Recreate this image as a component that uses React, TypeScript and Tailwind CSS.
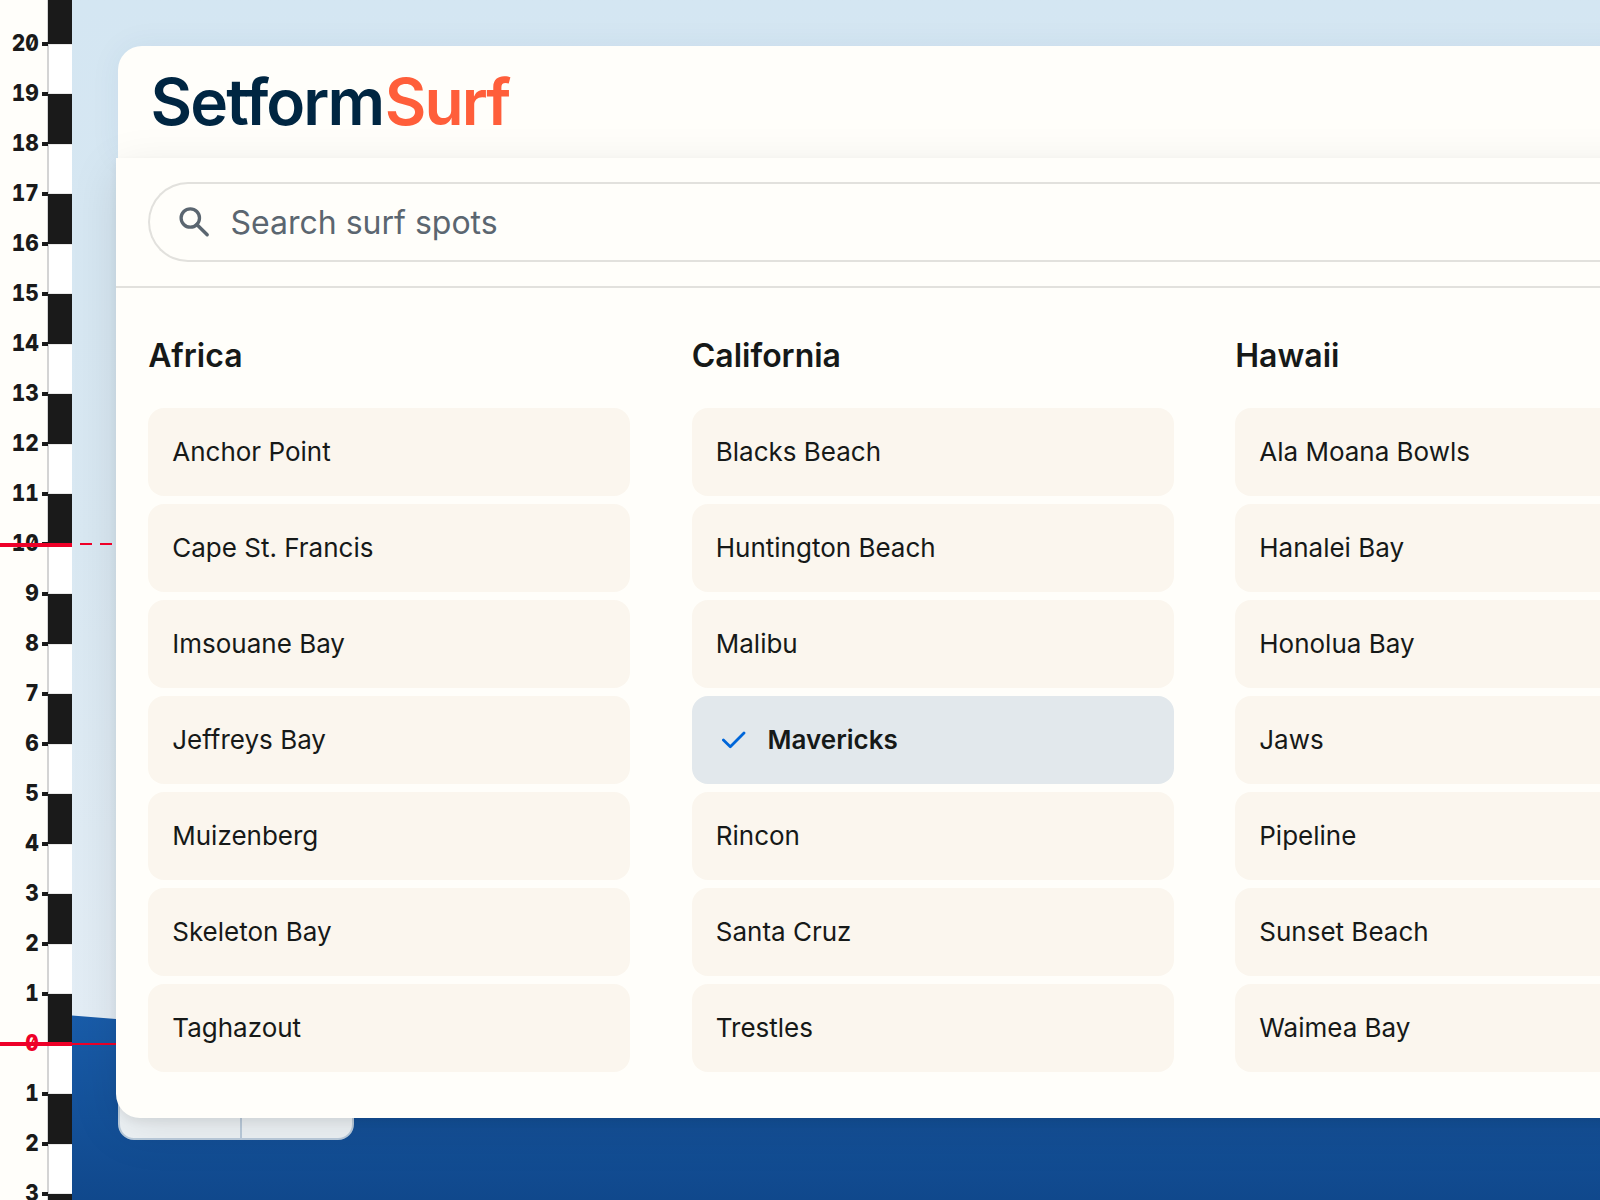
import clsx from "clsx";

interface SpotGroup {
    region: string;
    spots: string[];
}

const SELECTED_SPOT = "Mavericks";

const GROUPS: SpotGroup[] = [
    {
        region: "Africa",
        spots: [
            "Anchor Point",
            "Cape St. Francis",
            "Imsouane Bay",
            "Jeffreys Bay",
            "Muizenberg",
            "Skeleton Bay",
            "Taghazout",
        ],
    },
    {
        region: "California",
        spots: [
            "Blacks Beach",
            "Huntington Beach",
            "Malibu",
            "Mavericks",
            "Rincon",
            "Santa Cruz",
            "Trestles",
        ],
    },
    {
        region: "Hawaii",
        spots: [
            "Ala Moana Bowls",
            "Hanalei Bay",
            "Honolua Bay",
            "Jaws",
            "Pipeline",
            "Sunset Beach",
            "Waimea Bay",
        ],
    },
];

// feet above and below the waterline, top to bottom
const MARKS = Array.from({ length: 24 }, (_, i) => 20 - i);

function SearchIcon() {
    return (
        <svg viewBox="0 0 32 32" className="h-8 w-8 shrink-0" fill="none">
            <circle cx="11.3" cy="12" r="9.2" stroke="#5b6670" strokeWidth="3.3" />
            <path d="M17.8 18.5 28.2 28.8" stroke="#5b6670" strokeWidth="3.4" strokeLinecap="round" />
        </svg>
    );
}

function CheckIcon() {
    return (
        <svg viewBox="0 0 24 18" className="h-[18px] w-6 shrink-0" fill="none">
            <path
                d="M1.4 9.1 8.3 15.8 22 2"
                stroke="#0066d9"
                strokeWidth="2.8"
                strokeLinecap="round"
                strokeLinejoin="round"
            />
        </svg>
    );
}

function DepthRuler() {
    return (
        <div className="relative z-10 flex h-full w-[72px] shrink-0 bg-[#fffefa]">
            <div className="flex w-12 flex-col border-r border-[#d4d4d4] pt-[19px]">
                {MARKS.map(mark => (
                    <div
                        key={mark}
                        className={clsx(
                            "-mr-px flex h-[50px] shrink-0 items-center justify-end",
                            mark === 0 ? "text-[#ee0028]" : "text-[#1a1a1a]",
                        )}
                    >
                        <span className="mr-[3.5px] -mt-0.5 origin-right scale-x-[0.91] text-[23px] leading-none font-extrabold [font-feature-settings:'tnum','zero']">
                            {Math.abs(mark)}
                        </span>
                        <span className="h-1 w-1.5 bg-[#1a1a1a]" />
                    </div>
                ))}
            </div>
            <div className="flex w-6 flex-col">
                <div className="h-11 shrink-0 bg-[#1a1a1a]" />
                {MARKS.map((mark, i) => (
                    <div
                        key={mark}
                        className={clsx(
                            "h-[50px] shrink-0",
                            i % 2 === 0
                                ? "border-y border-l border-y-[#e8e8e8] border-l-[#d4d4d4] bg-white"
                                : "bg-[#1a1a1a]",
                        )}
                    />
                ))}
            </div>
            {/* wave height and waterline markers */}
            <div className="absolute top-[543px] left-0 h-1 w-[72px] bg-[#ee0028]" />
            <div className="absolute top-[1042px] left-0 h-1 w-[72px] bg-[#ee0028]" />
        </div>
    );
}

function SpotItem({ name }: { name: string }) {
    const selected = name === SELECTED_SPOT;

    return (
        <li
            className={clsx(
                "flex h-[88px] items-center rounded-2xl",
                selected
                    ? "gap-[22px] bg-[#e2e8ec] pl-[30px] font-semibold"
                    : "bg-[#fbf6ee] pl-[24.25px]",
            )}
        >
            {selected && <CheckIcon />}
            <span className="text-[26px] leading-none">{name}</span>
        </li>
    );
}

function SpotPanel() {
    return (
        <div className="relative -ml-0.5 h-[960px] rounded-b-3xl bg-[#fffefa] shadow-[0_12px_48px_rgba(0,0,0,0.10),0_4px_8px_rgba(0,0,0,0.06)]">
            <div className="border-b-2 border-[#e2e1dd] pt-6 pb-6 pl-8">
                <div className="flex h-20 items-center gap-[19.5px] rounded-l-full border-2 border-r-0 border-[#e2e1dd] pl-[29px] text-[#5b6670]">
                    <SearchIcon />
                    <span className="pt-0.5 text-[32px] leading-none">Search surf spots</span>
                </div>
            </div>
            <div className="flex gap-[61.5px] pt-12 pl-8">
                {GROUPS.map(group => (
                    <section key={group.region} className="w-[482px] shrink-0">
                        <h2 className="pl-[0.25px] text-[32px] leading-10 font-semibold">{group.region}</h2>
                        <ul className="mt-8 flex flex-col gap-2">
                            {group.spots.map(name => (
                                <SpotItem key={name} name={name} />
                            ))}
                        </ul>
                    </section>
                ))}
            </div>
        </div>
    );
}

export default function App() {
    return (
        <div className="relative flex h-[1200px] w-[1600px] overflow-hidden bg-linear-to-b from-[#d4e6f2] from-0% via-[#d9e8f2] via-45% to-[#e3edf5] to-85% font-['Inter',sans-serif] text-[#161918]">
            {/* sea */}
            <svg
                viewBox="0 0 1600 200"
                className="absolute top-[1000px] left-0 h-[200px] w-[1600px]"
            >
                <defs>
                    <linearGradient id="sea" x1="0" y1="0" x2="0" y2="1">
                        <stop offset="0" stopColor="#195ca9" />
                        <stop offset="1" stopColor="#10488c" />
                    </linearGradient>
                </defs>
                <path d="M72 15.5 116 19 300 30H1600V200H72Z" fill="url(#sea)" />
            </svg>
            <div className="absolute top-[1043px] left-[72px] h-0.5 w-11 bg-[#ee0028]" />
            <div className="absolute top-[543px] left-20 z-10 flex gap-2">
                <div className="h-0.5 w-3 bg-[#ee0028]" />
                <div className="h-0.5 w-3 bg-[#ee0028]" />
            </div>

            <DepthRuler />

            {/* the sheet runs on past the right edge of the window */}
            <main className="relative ml-[46px] w-[2200px] shrink-0 pt-[46px]">
                <header className="h-[112px] rounded-tl-3xl bg-[#fffefa] pt-[18px] pl-[32.5px] shadow-[0_0_32px_rgba(0,60,120,0.06)]">
                    <h1 className="text-[64px] leading-[76px] font-semibold tracking-[-0.03em] text-[#002642]">
                        Setform<span className="ml-[1.5px] text-[#ff5e3a]">Surf</span>
                    </h1>
                </header>
                <div className="absolute top-[1080px] left-0 flex h-[60px] w-[236px] rounded-b-2xl border-2 border-[#bccddd] bg-[#eff4f7]">
                    <div className="w-[122px] border-r-2 border-[#bccddd]" />
                </div>
                <SpotPanel />
            </main>
        </div>
    );
}
